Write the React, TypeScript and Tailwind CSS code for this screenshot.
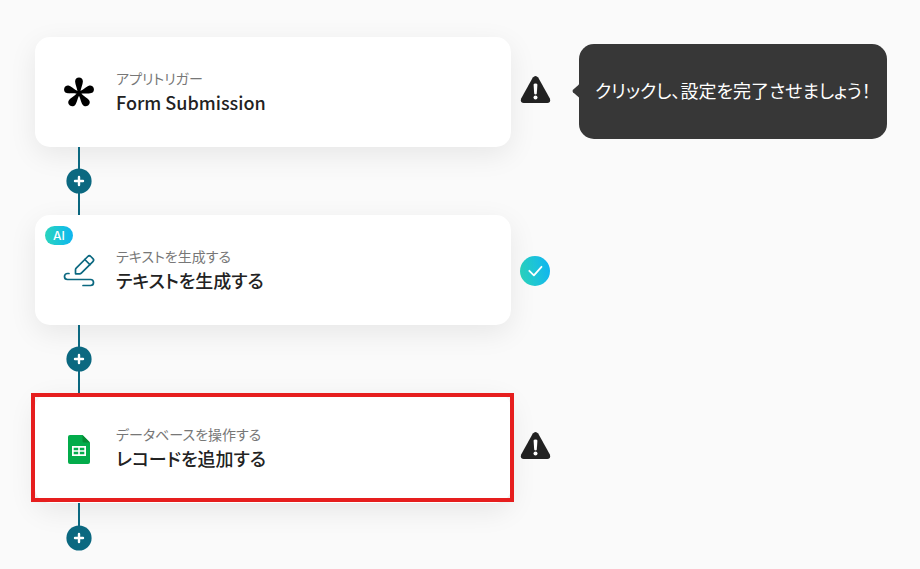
import type { ReactNode } from 'react';
import clsx from 'clsx';

type StepStatus = 'warning' | 'done';

interface Step {
  id: string;
  category: string;
  title: string;
  icon: ReactNode;
  status: StepStatus;
  ai?: boolean;
  selected?: boolean;
  hint?: string;
}

const steps: Step[] = [
  {
    id: 'trigger',
    category: 'アプリトリガー',
    title: 'Form Submission',
    icon: <AsteriskIcon />,
    status: 'warning',
    hint: 'クリックし、設定を完了させましょう！',
  },
  {
    id: 'generate',
    category: 'テキストを生成する',
    title: 'テキストを生成する',
    icon: <PencilIcon />,
    status: 'done',
    ai: true,
  },
  {
    id: 'database',
    category: 'データベースを操作する',
    title: 'レコードを追加する',
    icon: <SheetIcon />,
    status: 'warning',
    selected: true,
  },
];

export default function App() {
  return (
    <main
      lang="ja"
      className="min-h-screen bg-[#fafafa] pt-[37px] pr-4 pb-4 pl-[35px] font-['Noto_Sans_CJK_JP',sans-serif] [font-feature-settings:'palt']"
    >
      {steps.map((step, i) => (
        <section key={step.id}>
          <StepRow step={step} />
          <Connector last={i === steps.length - 1} />
        </section>
      ))}
    </main>
  );
}

function StepRow({ step }: { step: Step }) {
  return (
    <div className="flex items-center">
      <button
        type="button"
        className="relative flex h-[110px] max-w-[476px] flex-1 items-center gap-[21px] rounded-[15px] bg-white pl-7 text-left shadow-[0_8px_28px_rgba(0,0,0,0.08)]"
      >
        {step.ai && (
          <span className="absolute top-[11px] left-[10px] flex h-[19px] w-7 items-center justify-center rounded-full bg-linear-to-r from-[#2bd4bd] to-[#10b5f0] font-['Inter',sans-serif] text-xs font-medium text-white">
            AI
          </span>
        )}
        <span className="flex w-8 shrink-0 justify-center">{step.icon}</span>
        <span className="flex flex-col">
          <span className="text-sm leading-5 text-[#777]">{step.category}</span>
          <span className="text-lg leading-7 font-medium text-[#222]">{step.title}</span>
        </span>
        {step.selected && (
          <span className="pointer-events-none absolute top-0 -right-[3px] bottom-px -left-1 border-4 border-[#e61e1e]" />
        )}
      </button>
      <span className="ml-[9px] shrink-0">
        {step.status === 'warning' ? <WarningIcon /> : <DoneIcon />}
      </span>
      {step.hint && <Hint text={step.hint} />}
    </div>
  );
}

function Hint({ text }: { text: string }) {
  return (
    <div
      role="tooltip"
      className="relative mb-0.5 ml-7 flex h-[95px] items-center rounded-[15px] bg-[#373737] px-4 pb-0.5 text-lg whitespace-nowrap text-white"
    >
      <svg className="absolute top-10 -left-[7px]" width="8" height="14" viewBox="0 0 8 14" aria-hidden="true">
        <path d="M8 0 7 .4 1 5.8Q0 7 1 8.200L7 13.600 8 14Z" fill="#373737" />
      </svg>
      {text}
    </div>
  );
}

function Connector({ last }: { last: boolean }) {
  return (
    <div className="relative ml-[31px] flex w-[26px] flex-col items-center">
      <span className={clsx('w-0.5 bg-[#0b6880]', last ? 'h-[23px]' : 'h-[22px]')} />
      <button type="button" aria-label="追加" className="-my-px size-[26px] rounded-full">
        <svg width="26" height="26" viewBox="0 0 26 26" aria-hidden="true">
          <circle cx="13" cy="13" r="12.600" fill="#0b6880" />
          <path d="M13 9v8M9 13h8" stroke="#fff" strokeWidth="2.400" strokeLinecap="round" />
        </svg>
      </button>
      {!last && <span className="h-[22px] w-0.5 bg-[#0b6880]" />}
    </div>
  );
}

function AsteriskIcon() {
  return (
    <svg width="32" height="34" viewBox="-16 -18 32 34" aria-hidden="true">
      {[0, 72, 144, 216, 288].map((angle) => (
        <path
          key={angle}
          d="M-1.200 1C-1.300-4.500-3.900-8.500-3.900-11.600C-3.900-14-2.200-15.500 0-15.500S3.900-14 3.900-11.600C3.900-8.500 1.300-4.500 1.200 1Z"
          transform={`rotate(${angle})`}
        />
      ))}
      <circle r="2.500" />
    </svg>
  );
}

function PencilIcon() {
  return (
    <svg
      width="32"
      height="36"
      viewBox="0 -2 32 36"
      fill="none"
      stroke="#0b6880"
      strokeWidth="1.700"
      strokeLinecap="round"
      strokeLinejoin="round"
      aria-hidden="true"
    >
      <path d="M12.500 19.500V15.800Q12.500 14.800 13.200 14.100L24.800 2.500Q26.300 1 27.800 2.500L29.900 4.600Q31.400 6.100 29.900 7.600L18.300 19.200Q17.600 19.900 16.600 19.900H12.900Q12.500 19.900 12.500 19.500Z" />
      <path d="m21.800 5.500 5.100 5.100" />
      <path d="M6 19.500H4.500a3 3 0 0 0 0 6H27.500a3 3 0 0 1 0 6H20" />
    </svg>
  );
}

function SheetIcon() {
  return (
    <svg width="22" height="31" viewBox="0 -2 22 31" aria-hidden="true">
      <path d="M2 0H14.500L22 7.500V27a2 2 0 0 1-2 2H2a2 2 0 0 1-2-2V2a2 2 0 0 1 2-2Z" fill="#03ac4b" />
      <path d="M14.500 0 22 7.500H16a1.500 1.500 0 0 1-1.500-1.500Z" fill="#058a34" />
      <path d="M4 11H18V21H4Z" fill="#fff" />
      <path
        d="M5.700 12.700H10.200V15.200H5.700ZM11.800 12.700H16.300V15.200H11.800ZM5.700 16.800H10.200V19.300H5.700ZM11.800 16.800H16.300V19.300H11.800Z"
        fill="#03ac4b"
      />
    </svg>
  );
}

function WarningIcon() {
  return (
    <svg width="31" height="32" viewBox="0 0 31 32" aria-hidden="true">
      <path
        d="M12.800 1.600Q15.500-1.500 18.200 1.600L29.700 22.300Q31.300 26.600 27.300 27H3.700Q-.3 26.600 1.300 22.300Z"
        fill="#222"
      />
      <path d="M13.600 8.800Q13.600 7.600 15.500 7.600T17.400 8.800L16.800 17.400Q16.600 18.400 15.500 18.400T14.200 17.400Z" fill="#fff" />
      <circle cx="15.500" cy="21.600" r="2" fill="#fff" />
    </svg>
  );
}

function DoneIcon() {
  return (
    <svg width="30" height="32" viewBox="0 -2 30 32" fill="none" aria-hidden="true">
      <defs>
        <linearGradient id="done" x1="0" y1="0.600" x2="1" y2="0.400">
          <stop stopColor="#2bd4bd" />
          <stop offset="1" stopColor="#10b5f0" />
        </linearGradient>
      </defs>
      <circle cx="15" cy="15" r="15" fill="url(#done)" />
      <path d="m9.300 14.800 4.600 4.600L21.500 10.800" stroke="#fff" strokeWidth="1.800" strokeLinecap="round" strokeLinejoin="round" />
    </svg>
  );
}
